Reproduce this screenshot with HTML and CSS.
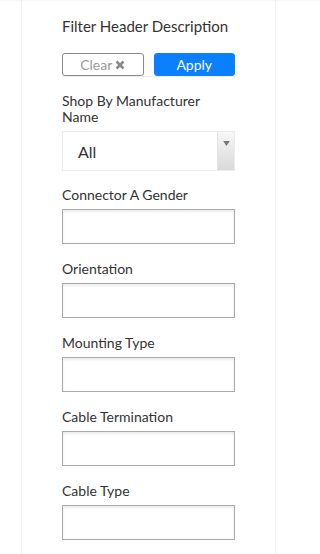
FILE: index.html
```html
<!DOCTYPE html>
<html>
<head>
<meta charset="utf-8">
<link rel="stylesheet" href="styles.css">
</head>
<body>
<div class="panel">
  <h2 class="title">Filter Header Description</h2>
  <div class="actions">
    <button class="btn btn-clear">Clear <svg class="x" viewBox="0 0 10 10" width="10" height="10"><path d="M1.5 1.5 L8.5 8.5 M8.5 1.5 L1.5 8.5" stroke="#888" stroke-width="2.6" stroke-linecap="butt"/></svg></button>
    <button class="btn btn-apply">Apply</button>
  </div>
  <div class="field field-first">
    <div class="label">Shop By Manufacturer Name</div>
    <div class="select">
      <span class="select-value">All</span>
      <span class="select-arrow"><svg viewBox="0 0 8 6" width="7" height="5"><path d="M0 0 H8 L4 6 Z" fill="#777"/></svg></span>
    </div>
  </div>
  <div class="field field-second">
    <div class="label">Connector A Gender</div>
    <div class="input"></div>
  </div>
  <div class="field">
    <div class="label">Orientation</div>
    <div class="input"></div>
  </div>
  <div class="field">
    <div class="label">Mounting Type</div>
    <div class="input"></div>
  </div>
  <div class="field">
    <div class="label">Cable Termination</div>
    <div class="input"></div>
  </div>
  <div class="field">
    <div class="label">Cable Type</div>
    <div class="input"></div>
  </div>
</div>
</body>
</html>
```
FILE: styles.css
```css
html, body {
  margin: 0;
  padding: 0;
  background: #fff;
}
body {
  font-family: Lato, "Open Sans", sans-serif;
  color: #333;
  height: 554px;
  overflow: hidden;
  box-shadow: inset 0 2px 2px -1px rgba(0,0,0,0.04);
}
.panel {
  margin-left: 21px;
  width: 255px;
  min-height: 554px;
  border-left: 1px solid #f0f0f0;
  border-right: 1px solid #f0f0f0;
  padding: 16px 0 0 40px;
  box-sizing: border-box;
}
.title {
  margin: 0;
  font-size: 15px;
  font-weight: 400;
  line-height: 20px;
  color: #333;
}
.actions {
  display: flex;
  gap: 10px;
  width: 173px;
  margin-top: 17px;
  border-bottom: 1px solid #eee;
}
.btn {
  flex: 1;
  height: 23px;
  box-sizing: border-box;
  border-radius: 3px;
  font-family: Lato, sans-serif;
  font-size: 14px;
  padding: 0;
  display: flex;
  align-items: center;
  justify-content: center;
  gap: 3px;
}
.btn-clear {
  background: #fff;
  border: 1px solid #8a8a8a;
  color: #9a9a9a;
}
.btn-apply {
  background: #0a80ff;
  border: 1px solid #0a80ff;
  color: #fff;
}
.x {
  display: block;
}
.field {
  width: 173px;
  margin-top: 17px;
}
.field-first,
.field-second {
  margin-top: 16px;
}
.label {
  font-size: 14px;
  line-height: 16px;
  color: #333;
}
.select {
  margin-top: 6px;
  height: 40px;
  box-sizing: border-box;
  border: 1px solid #ececec;
  display: flex;
  align-items: stretch;
}
.select-value {
  flex: 1;
  padding-left: 15px;
  font-size: 16px;
  display: flex;
  align-items: center;
  color: #333;
}
.select-arrow {
  width: 17px;
  background: linear-gradient(#f7f7f7, #d9d9d9);
  border-left: 1px solid #e4e4e4;
  display: flex;
  justify-content: center;
  padding-top: 9px;
  box-sizing: border-box;
}
.select-arrow svg {
  display: block;
}
.input {
  margin-top: 6px;
  height: 35px;
  box-sizing: border-box;
  border: 1px solid #a9a9a9;
  box-shadow: inset 0 2px 3px rgba(0,0,0,0.08);
  background: #fff;
}
```
